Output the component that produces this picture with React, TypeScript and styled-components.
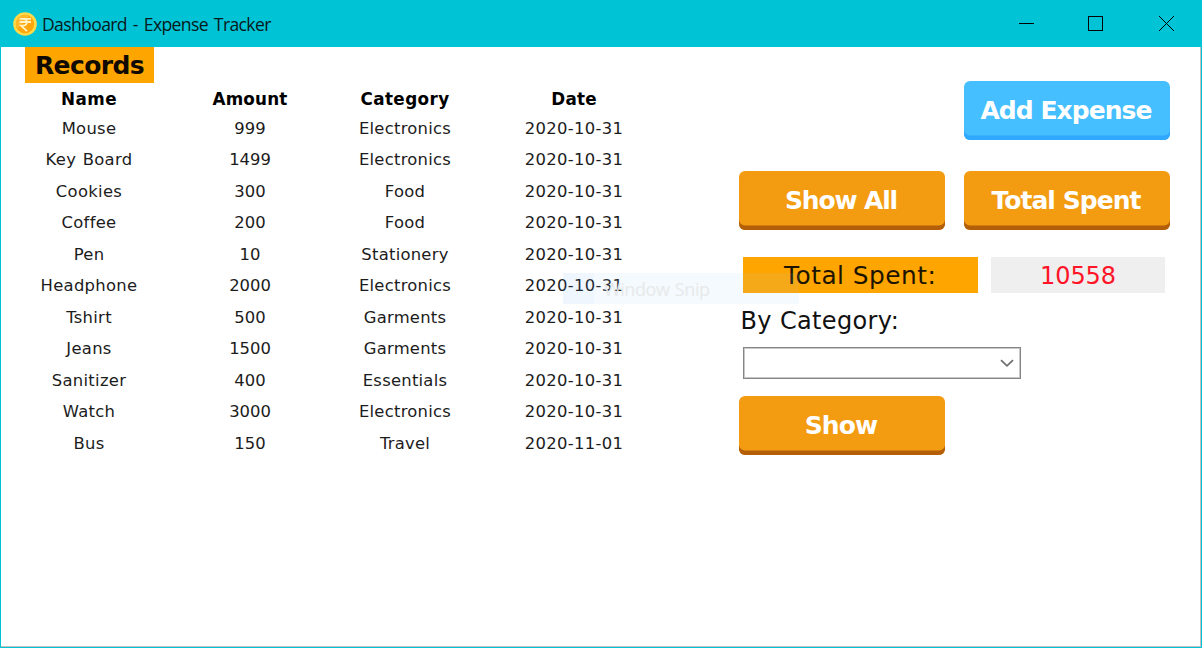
import React from "react";
import styled, { createGlobalStyle } from "styled-components";

const GlobalStyle = createGlobalStyle`
  body { margin: 0; background: #fff; }
  * { box-sizing: border-box; }
`;

const Window = styled.div`
  position: relative;
  width: 1202px;
  height: 648px;
  display: flex;
  flex-direction: column;
  overflow: hidden;
  background: #00c4d6;
  padding: 0 1px 1px 1px;
  font-family: "DejaVu Sans", Verdana, sans-serif;
`;

const TitleBar = styled.header`
  flex: none;
  height: 47px;
  display: flex;
  align-items: center;
  padding-left: 12px;
`;

const Title = styled.h1`
  margin: 1px 0 0 5px;
  flex: 1;
  font: 400 17.6px/24px "Open Sans", "Segoe UI", sans-serif;
  letter-spacing: -0.65px;
  word-spacing: 2px;
  color: #08191b;
  white-space: nowrap;
`;

const Controls = styled.div`
  display: flex;
`;

const Control = styled.span`
  width: 70px;
  height: 47px;
  display: flex;
`;

const Body = styled.main`
  flex: 1;
  display: flex;
  background: #fff;
  border: solid #c4c0c0;
  border-width: 0 1px 1px 0;
`;

const Records = styled.section`
  width: 738px;
  padding-left: 8px;
`;

const RecordsLabel = styled.h2`
  margin: 0 0 0 16px;
  width: 129px;
  height: 36px;
  background: #ffa500;
  color: #100a00;
  font-size: 25px;
  line-height: 37px;
  font-weight: 700;
  text-align: center;
  letter-spacing: -0.6px;
`;

const Row = styled.div<{ $head?: boolean }>`
  display: grid;
  grid-template-columns: 160px 162px 148px 190px;
  height: ${(p) => (p.$head ? 29.5 : 31.5)}px;
  padding-top: ${(p) => (p.$head ? 1.5 : 0)}px;
  align-items: center;
  text-align: center;
  font-size: ${(p) => (p.$head ? 16.8 : 16.4)}px;
  font-weight: ${(p) => (p.$head ? 700 : 400)};
  color: ${(p) => (p.$head ? "#000" : "#1c1c1c")};
`;

const Cell = styled.span<{ $spacing?: number }>`
  letter-spacing: ${(p) => p.$spacing ?? 0}px;
  word-spacing: 1px;
  white-space: nowrap;
`;

const Panel = styled.aside`
  width: 431px;
  padding-top: 34px;
  display: flex;
  flex-direction: column;
`;

const ButtonRow = styled.div<{ $end?: boolean; $top?: number }>`
  display: flex;
  justify-content: ${(p) => (p.$end ? "flex-end" : "space-between")};
  margin-top: ${(p) => p.$top ?? 0}px;
`;

const Button = styled.button<{ $blue?: boolean; $spacing: number }>`
  width: 206px;
  height: 59px;
  padding: 0 2px 1px 0;
  border: 0;
  border-radius: 6px;
  background: ${(p) => (p.$blue ? "#45bfff" : "#f39c12")};
  box-shadow: inset 0 -4.5px 0 ${(p) => (p.$blue ? "#2fa8ff" : "#b35f0a")};
  color: #fff;
  font: 700 25px/57px "DejaVu Sans", Verdana, sans-serif;
  letter-spacing: ${(p) => p.$spacing}px;
  white-space: nowrap;
`;

const TotalRow = styled.div`
  display: flex;
  gap: 13px;
  margin: 27px 0 0 4px;
`;

const TotalBox = styled.div<{ $value?: boolean }>`
  width: ${(p) => (p.$value ? 174 : 234.5)}px;
  height: 36px;
  padding-left: ${(p) => (p.$value ? 1 : 0)}px;
  line-height: ${(p) => (p.$value ? 38 : 37)}px;
  text-align: center;
  font-size: ${(p) => (p.$value ? 24 : 24.8)}px;
  letter-spacing: ${(p) => (p.$value ? -0.1 : 0.5)}px;
  background: ${(p) => (p.$value ? "#efefef" : "#ffa500")};
  color: ${(p) => (p.$value ? "#ff1528" : "#1c1400")};
`;

const FieldLabel = styled.label`
  margin: 10px 0 0 1.5px;
  height: 36px;
  line-height: 36px;
  font-size: 24px;
  letter-spacing: 0.36px;
  color: #111;
`;

const Select = styled.div`
  margin: 8px 0 0 4px;
  width: 278px;
  height: 32px;
  border: 1px solid #858585;
  box-shadow: inset 0 0 0 1px #c8c8c8;
  display: flex;
  align-items: center;
  justify-content: flex-end;
  padding-right: 5px;
`;

const Ghost = styled.div`
  position: absolute;
  left: 563px;
  top: 273px;
  width: 236px;
  height: 31px;
  display: flex;
  align-items: center;
  background: linear-gradient(90deg, rgba(95, 165, 245, 0.1) 31px, rgba(155, 205, 245, 0.1) 31px);
  padding-left: 41px;
  padding-top: 1px;
  font: 400 18px "Open Sans", "Segoe UI", sans-serif;
  letter-spacing: -0.4px;
  word-spacing: 1px;
  color: #e7e9ea;
  pointer-events: none;
`;

const records: [string, string, string, string][] = [
  ["Mouse", "999", "Electronics", "2020-10-31"],
  ["Key Board", "1499", "Electronics", "2020-10-31"],
  ["Cookies", "300", "Food", "2020-10-31"],
  ["Coffee", "200", "Food", "2020-10-31"],
  ["Pen", "10", "Stationery", "2020-10-31"],
  ["Headphone", "2000", "Electronics", "2020-10-31"],
  ["Tshirt", "500", "Garments", "2020-10-31"],
  ["Jeans", "1500", "Garments", "2020-10-31"],
  ["Sanitizer", "400", "Essentials", "2020-10-31"],
  ["Watch", "3000", "Electronics", "2020-10-31"],
  ["Bus", "150", "Travel", "2020-11-01"],
];

const spacings = [0.3, 0, 0.25, 0.3];

const CoinIcon = () => (
  <svg width="24" height="24" viewBox="0 0 24 24">
    <circle cx="12" cy="12" r="11.8" fill="#ffda49" />
    <circle cx="12" cy="12" r="9.2" fill="#ffa70a" />
    <path d="M6 5.3a9 9 0 0 0-1.5 11.5L16 4a9 9 0 0 0-10 1.3z" fill="#ffb92a" />
    <path d="M6.5 6.8h11.5M6.5 10h11.5M7.5 6.8h2.5c5.2 0 5.2 6.8 0 6.8H8L14 19.2" fill="none" stroke="#fff3c4" strokeWidth="1.8" />
  </svg>
);

export default function App() {
  return (
    <>
      <GlobalStyle />
      <Window>
        <TitleBar>
          <CoinIcon />
          <Title>Dashboard - Expense Tracker</Title>
          <Controls>
            <Control>
              <svg width="70" height="47" stroke="#000" shapeRendering="crispEdges">
                <path d="M28 23.5h15" />
              </svg>
            </Control>
            <Control>
              <svg width="70" height="47" fill="none" stroke="#000" shapeRendering="crispEdges">
                <rect x="27.5" y="16.5" width="14" height="14" />
              </svg>
            </Control>
            <Control>
              <svg width="70" height="47" stroke="#000">
                <path d="M28 16l15 15M43 16L28 31" />
              </svg>
            </Control>
          </Controls>
        </TitleBar>
        <Body>
          <Records>
            <RecordsLabel>Records</RecordsLabel>
            <Row $head>
              <Cell $spacing={0.4}>Name</Cell>
              <Cell $spacing={0.15}>Amount</Cell>
              <Cell $spacing={0.4}>Category</Cell>
              <Cell $spacing={0.2}>Date</Cell>
            </Row>
            {records.map((record) => (
              <Row key={record[0]}>
                {record.map((value, i) => (
                  <Cell key={i} $spacing={spacings[i]}>{value}</Cell>
                ))}
              </Row>
            ))}
          </Records>
          <Panel>
            <ButtonRow $end>
              <Button $blue $spacing={-0.95}>Add Expense</Button>
            </ButtonRow>
            <ButtonRow $top={31}>
              <Button $spacing={-1.15}>Show All</Button>
              <Button $spacing={-0.95}>Total Spent</Button>
            </ButtonRow>
            <TotalRow>
              <TotalBox>Total Spent:</TotalBox>
              <TotalBox $value>10558</TotalBox>
            </TotalRow>
            <FieldLabel>By Category:</FieldLabel>
            <Select>
              <svg width="16" height="16" viewBox="0 0 16 16" fill="none" stroke="#707070" strokeWidth="1.8">
                <path d="M2 5.2l6 5.6 6-5.6" />
              </svg>
            </Select>
            <ButtonRow $top={17}>
              <Button $spacing={-0.9}>Show</Button>
            </ButtonRow>
          </Panel>
        </Body>
        <Ghost>Window Snip</Ghost>
      </Window>
    </>
  );
}
